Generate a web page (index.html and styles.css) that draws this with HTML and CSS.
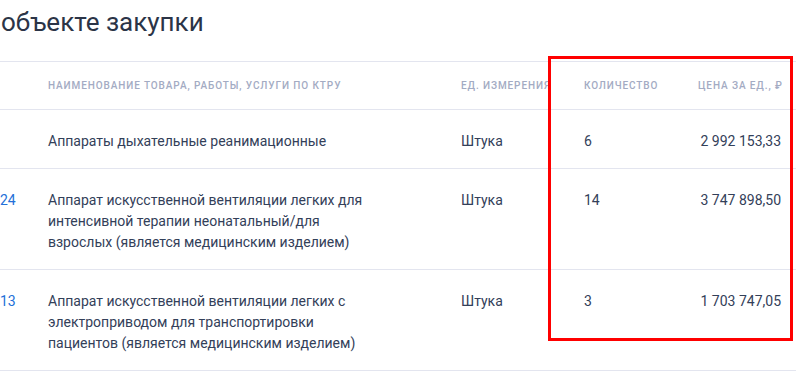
FILE: index.html
```html
<!DOCTYPE html>
<html lang="ru">
<head>
<meta charset="utf-8">
<link rel="stylesheet" href="styles.css">
</head>
<body>
<div class="page">
  <h1 class="title">объекте закупки</h1>
  <div class="table">
    <div class="row head">
      <div class="cell code"></div>
      <div class="cell name">Наименование товара, работы, услуги по КТРУ</div>
      <div class="cell unit">Ед. измерения</div>
      <div class="cell qty">Количество</div>
      <div class="cell price">Цена за ед., ₽</div>
    </div>
    <div class="row">
      <div class="cell code"></div>
      <div class="cell name">Аппараты дыхательные реанимационные</div>
      <div class="cell unit">Штука</div>
      <div class="cell qty">6</div>
      <div class="cell price">2 992 153,33</div>
    </div>
    <div class="row">
      <div class="cell code"><span class="link">24</span></div>
      <div class="cell name">Аппарат искусственной вентиляции легких для интенсивной терапии неонатальный/для взрослых (является медицинским изделием)</div>
      <div class="cell unit">Штука</div>
      <div class="cell qty">14</div>
      <div class="cell price">3 747 898,50</div>
    </div>
    <div class="row">
      <div class="cell code"><span class="link">13</span></div>
      <div class="cell name">Аппарат искусственной вентиляции легких с электроприводом для транспортировки пациентов (является медицинским изделием)</div>
      <div class="cell unit">Штука</div>
      <div class="cell qty">3</div>
      <div class="cell price">1 703 747,05</div>
    </div>
  </div>
  <div class="highlight"></div>
</div>
</body>
</html>
```

FILE: styles.css
```css
html, body {
  margin: 0;
  padding: 0;
  background: #ffffff;
}
.page {
  position: relative;
  width: 796px;
  height: 375px;
  overflow: hidden;
  font-family: Roboto, "Noto Sans", sans-serif;
  color: #334059;
}
.title {
  margin: 0;
  padding: 4px 0 0 1px;
  height: 56px;
  box-sizing: border-box;
  font-size: 26px;
  font-weight: 400;
  line-height: 36px;
  color: #2b3447;
}
.table {
  border-top: 1px solid #e3e5ef;
  margin-top: 5px;
}
.row {
  display: grid;
  grid-template-columns: 48px 413px 123px 114px 1fr;
  border-bottom: 1px solid #e3e5ef;
  font-size: 14px;
  line-height: 21px;
}
.row .cell {
  padding: 21px 0 16px;
}
.row.head .cell {
  padding: 0;
  height: 47px;
  display: flex;
  align-items: center;
  font-size: 10px;
  font-weight: 500;
  letter-spacing: 0.9px;
  text-transform: uppercase;
  color: #a3abc3;
  white-space: nowrap;
}
.row.head .price {
  justify-content: flex-end;
}
.code {
  text-align: right;
  padding-right: 35px !important;
  overflow: hidden;
}
.link {
  color: #2370d8;
}
.name {
  padding-right: 86px !important;
}
.price {
  text-align: right;
  padding-right: 15px !important;
}
.highlight {
  position: absolute;
  left: 548px;
  top: 56px;
  width: 245px;
  height: 285px;
  box-sizing: border-box;
  border: 3px solid #ff0000;
}
```
